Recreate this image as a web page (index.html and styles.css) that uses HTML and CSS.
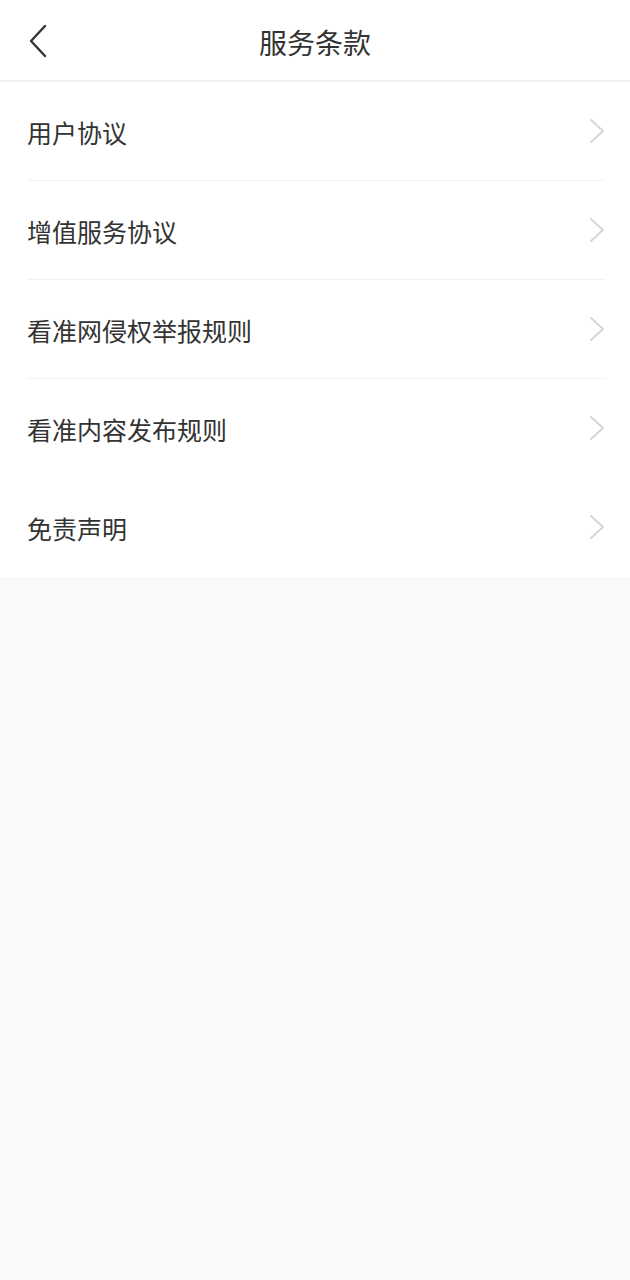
FILE: index.html
```html
<!DOCTYPE html>
<html lang="zh-CN">
<head>
<meta charset="utf-8">
<link rel="stylesheet" href="styles.css">
</head>
<body>
<header class="bar">
  <span class="back"><svg width="20" height="34" viewBox="0 0 20 34"><path d="M17 2 L3 17 L17 32" fill="none" stroke="#333" stroke-width="2.4" stroke-linecap="round" stroke-linejoin="round"/></svg></span>
  <h1 class="title">服务条款</h1>
</header>
<ul class="list">
  <li class="item"><span>用户协议</span><svg class="arrow" width="16" height="26" viewBox="0 0 16 26"><path d="M2 2 L14 13 L2 24" fill="none" stroke="#d4d4d4" stroke-width="1.8" stroke-linecap="round" stroke-linejoin="round"/></svg></li>
  <li class="item"><span>增值服务协议</span><svg class="arrow" width="16" height="26" viewBox="0 0 16 26"><path d="M2 2 L14 13 L2 24" fill="none" stroke="#d4d4d4" stroke-width="1.8" stroke-linecap="round" stroke-linejoin="round"/></svg></li>
  <li class="item"><span>看准网侵权举报规则</span><svg class="arrow" width="16" height="26" viewBox="0 0 16 26"><path d="M2 2 L14 13 L2 24" fill="none" stroke="#d4d4d4" stroke-width="1.8" stroke-linecap="round" stroke-linejoin="round"/></svg></li>
  <li class="item noline"><span>看准内容发布规则</span><svg class="arrow" width="16" height="26" viewBox="0 0 16 26"><path d="M2 2 L14 13 L2 24" fill="none" stroke="#d4d4d4" stroke-width="1.8" stroke-linecap="round" stroke-linejoin="round"/></svg></li>
  <li class="item noline"><span>免责声明</span><svg class="arrow" width="16" height="26" viewBox="0 0 16 26"><path d="M2 2 L14 13 L2 24" fill="none" stroke="#d4d4d4" stroke-width="1.8" stroke-linecap="round" stroke-linejoin="round"/></svg></li>
</ul>
</body>
</html>
```
FILE: styles.css
```css
html, body {
  margin: 0;
  padding: 0;
  background: #f9f9f9;
  font-family: "Noto Sans CJK SC", "Noto Sans", sans-serif;
  color: #333;
}
.bar {
  height: 80px;
  background: #fff;
  border-bottom: 2px solid #f0f0f0;
  display: flex;
  align-items: center;
  justify-content: center;
  position: relative;
}
.back {
  position: absolute;
  left: 28px;
  top: 24px;
  display: flex;
}
.title {
  margin: 0;
  font-size: 28px;
  font-weight: 400;
  color: #333;
  line-height: 1;
  padding-top: 4px;
}
.list {
  list-style: none;
  margin: 0;
  padding: 0 25px 0 27px;
  background: #fff;
}
.item {
  height: 98px;
  border-bottom: 1px solid #f2f2f2;
  display: flex;
  align-items: center;
  justify-content: space-between;
  font-size: 25px;
  color: #333;
}
.item span {
  line-height: 1;
  padding-top: 2px;
}
.item.noline {
  border-bottom: 1px solid transparent;
}
.arrow {
  display: block;
}
```
